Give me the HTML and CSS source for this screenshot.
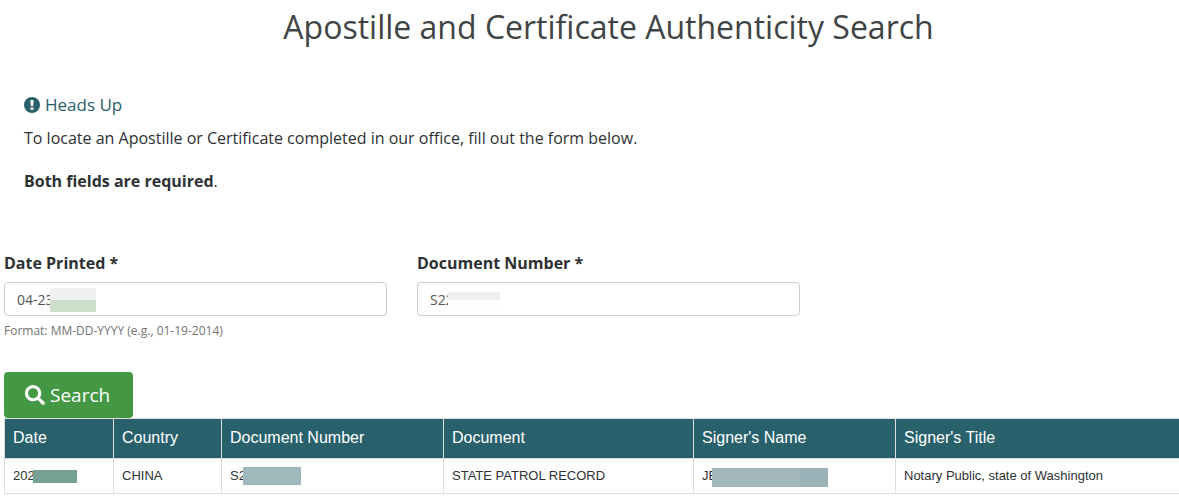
FILE: index.html
```html
<!DOCTYPE html>
<html lang="en">
<head>
<meta charset="utf-8">
<title>Apostille and Certificate Authenticity Search</title>
<link rel="stylesheet" href="styles.css">
</head>
<body>
<main class="page">
  <h1 class="title">Apostille and Certificate Authenticity Search</h1>
  <section class="notice">
    <p class="notice-head">
      <svg class="notice-icon" viewBox="0 0 16 16" aria-hidden="true"><circle cx="8" cy="8" r="8" fill="#28616c"/><path d="M6.300 3h3.400L9.200 9H6.800z" fill="#fff"/><circle cx="8" cy="11.500" r="1.600" fill="#fff"/></svg>
      <span>Heads Up</span>
    </p>
    <p class="notice-text">To locate an Apostille or Certificate completed in our office, fill out the form below.</p>
    <p class="notice-text"><strong>Both fields are required</strong>.</p>
  </section>
  <form class="search">
    <div class="fields">
      <div class="field">
        <label class="label" for="date">Date Printed *</label>
        <div class="control">
          <input class="input" id="date" type="text" value="04-23" aria-describedby="date-help">
          <span class="mask mask-date"></span>
        </div>
        <small class="help" id="date-help">Format: MM-DD-YYYY (e.g., 01-19-2014)</small>
      </div>
      <div class="field">
        <label class="label" for="number">Document Number *</label>
        <div class="control">
          <input class="input" id="number" type="text" value="S22">
          <span class="mask mask-number"></span>
        </div>
      </div>
    </div>
    <button class="button" type="button">
      <svg class="button-icon" viewBox="0 0 512 512" aria-hidden="true"><path fill="#fff" d="M505 442.700L405.300 343c-4.500-4.500-10.600-7-17-7H372c27.600-35.300 44-79.700 44-128C416 93.100 322.900 0 208 0S0 93.100 0 208s93.100 208 208 208c48.300 0 92.700-16.400 128-44v16.300c0 6.400 2.500 12.500 7 17l99.700 99.700c9.400 9.400 24.600 9.400 33.900 0l28.300-28.300c9.400-9.400 9.400-24.600.1-34zM208 336c-70.700 0-128-57.200-128-128 0-70.700 57.200-128 128-128 70.700 0 128 57.200 128 128 0 70.700-57.200 128-128 128z"/></svg>
      <span>Search</span>
    </button>
  </form>
  <table class="results">
    <colgroup><col class="col-date"><col class="col-country"><col class="col-number"><col class="col-document"><col class="col-name"><col></colgroup>
    <thead>
      <tr><th scope="col">Date</th><th scope="col">Country</th><th scope="col">Document Number</th><th scope="col">Document</th><th scope="col">Signer's Name</th><th scope="col">Signer's Title</th></tr>
    </thead>
    <tbody>
      <tr>
        <td>202<span class="mask mask-row-date"></span></td>
        <td>CHINA</td>
        <td>S2<span class="mask mask-row-number"></span></td>
        <td>STATE PATROL RECORD</td>
        <td>JE<span class="mask mask-row-name"></span></td>
        <td>Notary Public, state of Washington</td>
      </tr>
    </tbody>
  </table>
</main>
</body>
</html>
```
FILE: styles.css
```css
* { box-sizing: border-box; }

body {
  margin: 0;
  overflow-x: hidden;
  background: #fff;
  color: #2e3133;
  font-family: "Open Sans", sans-serif;
  font-size: 16px;
  line-height: 24px;
}

.page { margin: 0 -34px 0 4px; }

.title {
  margin: 0;
  padding-top: 4px;
  color: #414445;
  font-size: 32px;
  font-weight: 400;
  line-height: 46px;
  text-align: center;
}

.notice { padding: 43px 20px 0; }

.notice-head {
  display: flex;
  align-items: center;
  gap: 5px;
  margin: 0 0 9px;
  color: #28616c;
  font-size: 17px;
}

.notice-icon { width: 16px; height: 16px; }

.notice-text { margin: 0 0 19px; }

.fields {
  display: grid;
  grid-template-columns: repeat(3, 1fr);
  gap: 30px;
  padding-top: 39px;
}

.label {
  display: block;
  margin-bottom: 7px;
  font-weight: 700;
}

.control { position: relative; }

.input {
  display: block;
  width: 100%;
  height: 34px;
  padding: 6px 12px;
  border: 1px solid #ccc;
  border-radius: 4px;
  background: #fff;
  color: #555;
  font: 14px "Open Sans", sans-serif;
}

.help {
  display: block;
  margin-top: 5px;
  color: #737373;
  font-size: 12px;
  line-height: 20px;
}

.button {
  display: flex;
  align-items: center;
  gap: 5px;
  height: 46px;
  margin-top: 31px;
  padding: 0 23px 0 21px;
  border: 0;
  border-radius: 4px;
  background: #449844;
  color: #fff;
  font: 19px "Open Sans", sans-serif;
}

.button-icon { width: 20px; height: 20px; }

.results {
  width: 100%;
  table-layout: fixed;
  border-collapse: collapse;
  font-family: "Liberation Sans", Arial, sans-serif;
  text-align: left;
}

.results th,
.results td {
  border: 1px solid #ddd;
  padding: 0 8px;
}

.results th {
  height: 40px;
  padding-bottom: 2px;
  background: #28616c;
  color: #fff;
  font-size: 16px;
  font-weight: 400;
}

.results td {
  position: relative;
  height: 35px;
  font-size: 13px;
}

.col-date { width: 109px; }
.col-country { width: 108px; }
.col-number { width: 222px; }
.col-document { width: 250px; }
.col-name { width: 202px; }

/* Redaction blocks over private values */
.mask { position: absolute; }

.mask-date {
  top: 6px;
  left: 46px;
  width: 46px;
  height: 24px;
  background: linear-gradient(#f0f0f0 50%, #cbdfcb 50%);
}

.mask-number {
  top: 10px;
  left: 31px;
  width: 52px;
  height: 15px;
  background: linear-gradient(#efefef 8px, #fdfdfd 8px);
}

.mask-row-date {
  top: 11px;
  left: 28px;
  width: 44px;
  height: 13px;
  background: #76a094;
}

.mask-row-number {
  top: 8px;
  left: 21px;
  width: 58px;
  height: 18px;
  background: #a0b7bb;
}

.mask-row-name {
  top: 9px;
  left: 18px;
  width: 116px;
  height: 19px;
  background: linear-gradient(90deg, #a2b8bc 88px, #9ab1b7 88px);
}
```
